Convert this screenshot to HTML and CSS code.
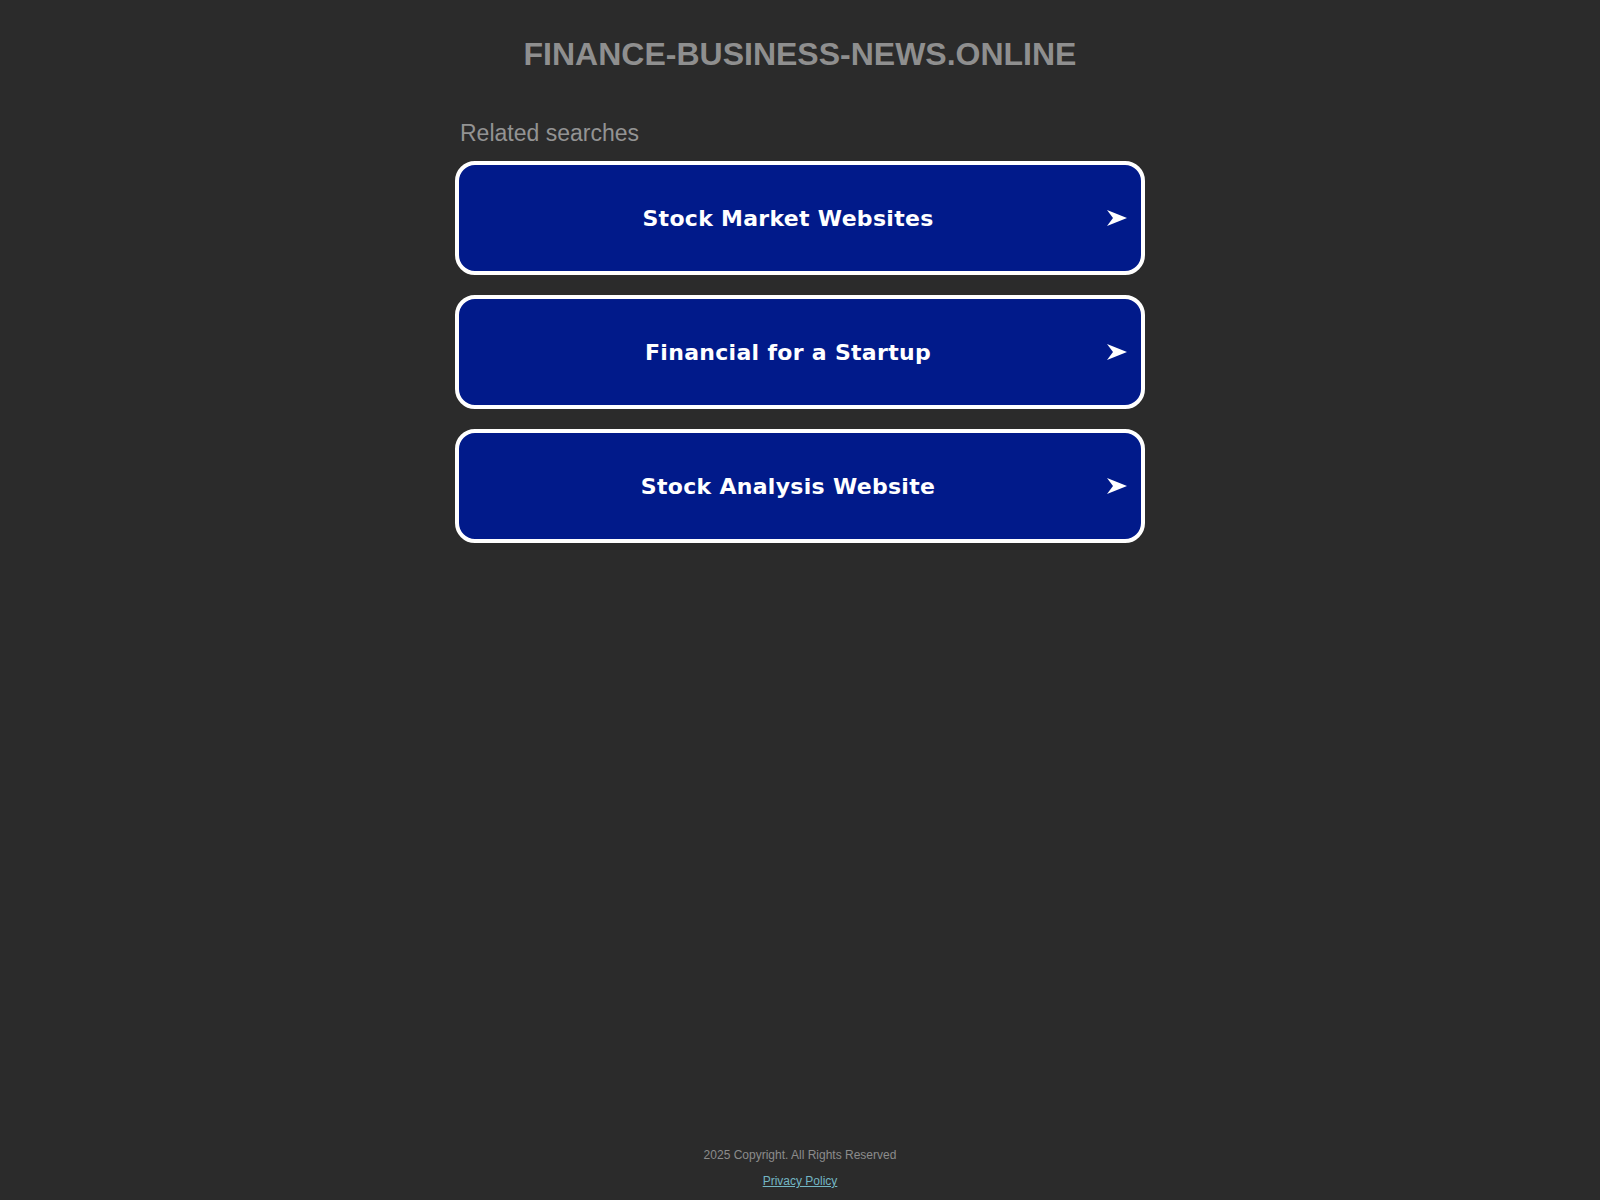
FILE: index.html
```html
<!DOCTYPE html>
<html lang="en">
<head>
    <meta charset="UTF-8">
    <meta name="viewport" content="width=device-width, initial-scale=1.0">
    <title>finance-business-news.online</title>
    <link rel="stylesheet" href="styles.css">
</head>
<body>
    <div class="page">
        <header class="header">
            <h1 class="domain">finance-business-news.online</h1>
        </header>

        <main class="content">
            <p class="related-title">Related searches</p>
            <div class="links">
                <a href="#" class="link-button">
                    <span class="link-text">Stock Market Websites</span>
                    <svg class="arrow" viewBox="0 0 20 16" width="20" height="16"><path d="M0 0 Q10 4 20 8 Q10 12 0 16 L6 8 Z" fill="#ffffff"/></svg>
                </a>
                <a href="#" class="link-button">
                    <span class="link-text">Financial for a Startup</span>
                    <svg class="arrow" viewBox="0 0 20 16" width="20" height="16"><path d="M0 0 Q10 4 20 8 Q10 12 0 16 L6 8 Z" fill="#ffffff"/></svg>
                </a>
                <a href="#" class="link-button">
                    <span class="link-text">Stock Analysis Website</span>
                    <svg class="arrow" viewBox="0 0 20 16" width="20" height="16"><path d="M0 0 Q10 4 20 8 Q10 12 0 16 L6 8 Z" fill="#ffffff"/></svg>
                </a>
            </div>
        </main>

        <footer class="footer">
            <p class="copyright">2025 Copyright. All Rights Reserved</p>
            <a href="#" class="privacy">Privacy Policy</a>
        </footer>
    </div>
</body>
</html>
```

FILE: styles.css
```css
* {
    margin: 0;
    padding: 0;
    box-sizing: border-box;
}

body {
    background-color: #2b2b2b;
    color: #919191;
    font-family: "Liberation Sans", Arial, sans-serif;
    min-height: 100vh;
}

.page {
    min-height: 100vh;
    display: flex;
    flex-direction: column;
    align-items: center;
}

.header {
    padding-top: 36px;
    text-align: center;
}

.domain {
    font-size: 32px;
    font-weight: 700;
    text-transform: uppercase;
    color: #8f8f8f;
    line-height: 36px;
}

.content {
    width: 690px;
    margin-top: 48px;
}

.related-title {
    font-size: 23px;
    line-height: 26px;
    padding-left: 5px;
    color: #939393;
    margin-bottom: 15px;
}

.links {
    display: flex;
    flex-direction: column;
    gap: 20px;
}

.link-button {
    display: flex;
    align-items: center;
    height: 114px;
    padding: 0 14px 0 10px;
    background-color: #011a8a;
    border: 4px solid #ffffff;
    border-radius: 20px;
    text-decoration: none;
    color: #ffffff;
}

.link-text {
    flex: 1;
    text-align: center;
    font-family: "DejaVu Sans", "Liberation Sans", sans-serif;
    font-size: 22px;
    font-weight: 700;
    letter-spacing: 0.3px;
}

.arrow {
    flex-shrink: 0;
}

.footer {
    margin-top: auto;
    padding-bottom: 12px;
    text-align: center;
    font-size: 12px;
}

.copyright {
    color: #8c8c8c;
    margin-bottom: 12px;
}

.privacy {
    color: #73b6c4;
}
```
